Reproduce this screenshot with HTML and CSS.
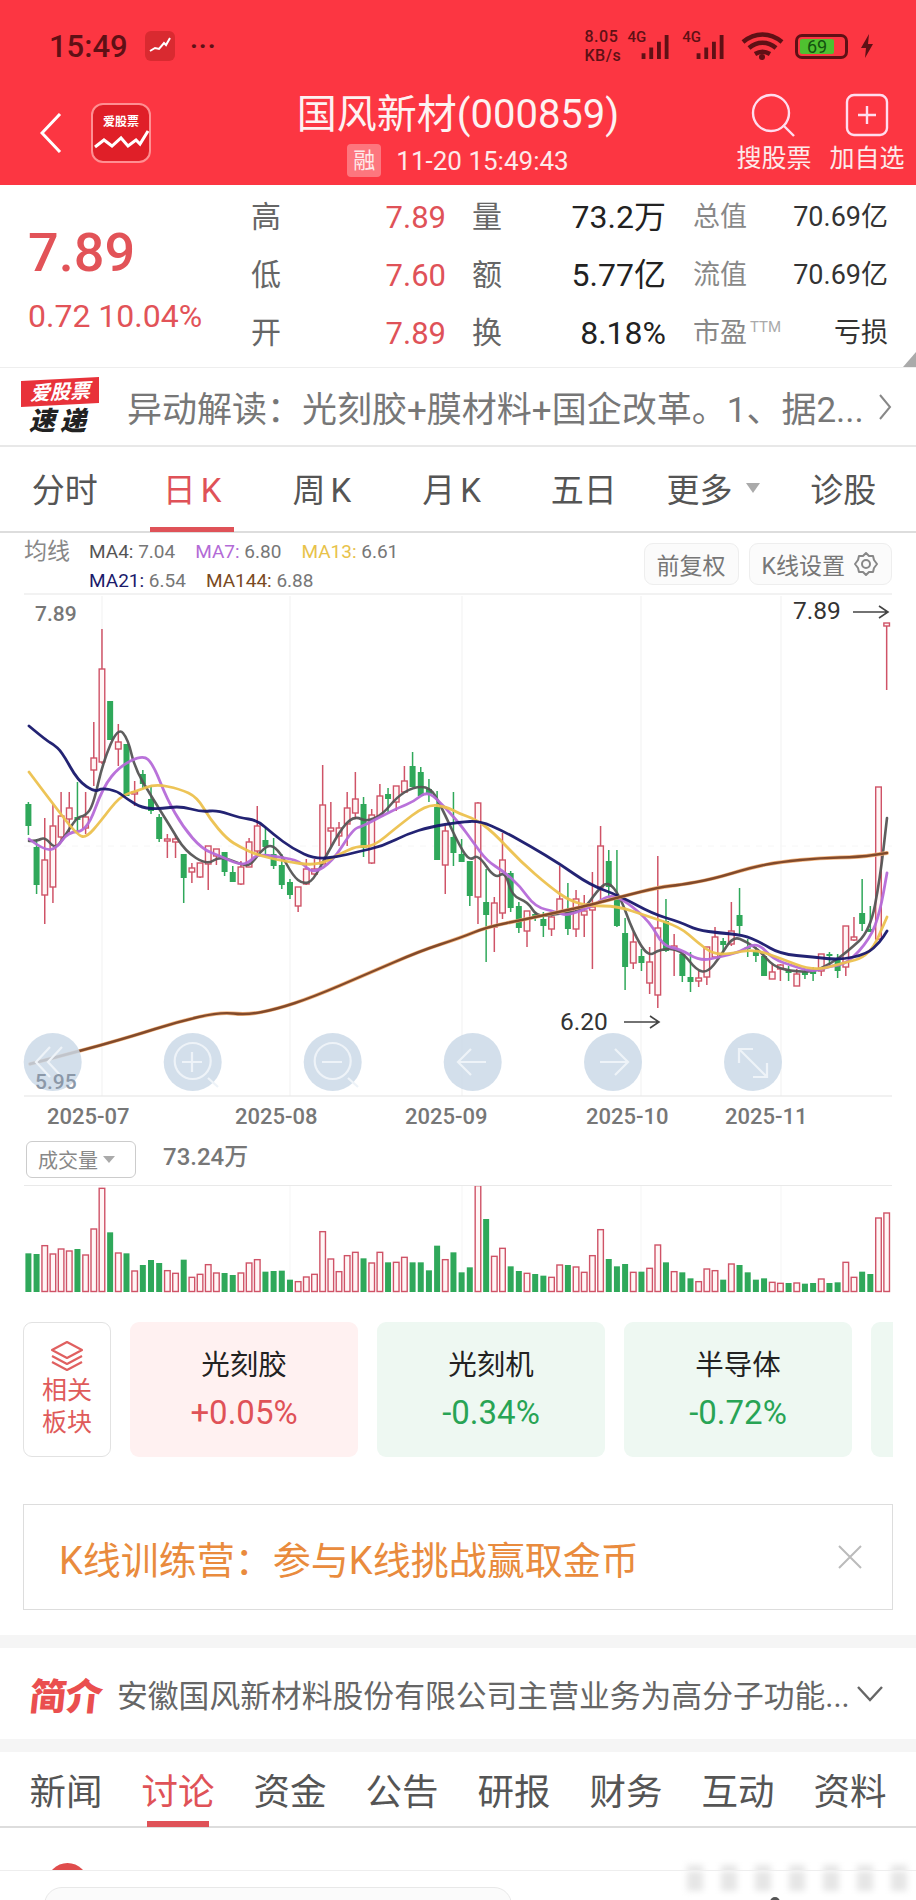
FILE: index.html
```html
<!doctype html>
<html lang="zh-CN">
<head>
  <meta charset="UTF-8">
  <title>国风新材(000859)</title>
  <meta name="viewport" content="width=device-width, initial-scale=1.0">
  <link rel="stylesheet" href="styles.css">
</head>
<body>
<div class="page">

  <header class="top">
    <div class="status">
      <div class="status-left">
        <span class="clock">15:49</span>
        <span class="app-mini">
          <svg viewBox="0 0 30 30" width="30" height="30"><path d="M5 20l5-3 4 1 5-6 2 2 4-7" fill="none" stroke="#fff" stroke-width="2"/></svg>
        </span>
        <span class="dots">···</span>
      </div>
      <div class="status-right">
        <span class="speed">8.05<br>KB/s</span>
        <span class="net"><b>4G</b>
          <svg viewBox="0 0 36 26" width="38" height="25"><path d="M2 19h4v6H2zM10 13h4v12h-4zM18 7h4v18h-4zM26 0h4v25h-4z" fill="#5f1015"/></svg>
        </span>
        <span class="net"><b>4G</b>
          <svg viewBox="0 0 36 26" width="38" height="25"><path d="M2 19h4v6H2zM10 13h4v12h-4zM18 7h4v18h-4zM26 0h4v25h-4z" fill="#5f1015"/></svg>
        </span>
        <svg class="wifi" viewBox="0 0 43 28" width="43" height="28">
          <path d="M2 10c12-10 27-10 39 0M8 16c8-7 19-7 27 0M14 22c5-3 10-3 15 0" fill="none" stroke="#5f1015" stroke-width="4.4"/>
          <circle cx="21" cy="25" r="3" fill="#5f1015"/>
        </svg>
        <span class="battery"><span class="battery-fill">69</span></span>
        <svg viewBox="0 0 14 26" width="14" height="26"><path d="M9 1L1 15h5l-1 10 8-14H8z" fill="#5f1015"/></svg>
      </div>
    </div>

    <div class="titlebar">
      <div class="title-left">
        <svg class="back" viewBox="0 0 22 40" width="22" height="40"><path d="M20 1L2 20l18 19" fill="none" stroke="#fff" stroke-width="3"/></svg>
        <div class="app-logo">
          <span>爱股票</span>
          <svg viewBox="0 0 56 24" width="56" height="24"><path d="M2 18l9-7 8 6 9-8 7 8 8-6 4 4 8-13" fill="none" stroke="#fff" stroke-width="3"/></svg>
        </div>
      </div>
      <div class="title-mid">
        <div class="stock-name">国风新材(000859)</div>
        <div class="stock-time"><span class="rong">融</span>11-20 15:49:43</div>
      </div>
      <div class="title-right">
        <div class="action">
          <svg viewBox="0 0 46 44" width="46" height="44"><circle cx="20" cy="20" r="18" fill="none" stroke="#fde" stroke-width="2.4"/><path d="M32 32l11 11" stroke="#fde" stroke-width="2.4"/></svg>
          <span>搜股票</span>
        </div>
        <div class="action">
          <svg viewBox="0 0 44 44" width="44" height="44"><rect x="2" y="2" width="40" height="40" rx="7" fill="none" stroke="#fde" stroke-width="2.4"/><path d="M22 13v18M13 22h18" stroke="#fde" stroke-width="2.4"/></svg>
          <span>加自选</span>
        </div>
      </div>
    </div>
  </header>

  <section class="quote">
    <div class="price">
      <div class="price-now">7.89</div>
      <div class="price-change">0.72 10.04%</div>
    </div>
    <div class="quote-grid">
      <span class="q-label">高</span><span class="q-val up">7.89</span>
      <span class="q-label mid">量</span><span class="q-val">73.2万</span>
      <span class="q-label small">总值</span><span class="q-val small">70.69亿</span>

      <span class="q-label">低</span><span class="q-val up">7.60</span>
      <span class="q-label mid">额</span><span class="q-val">5.77亿</span>
      <span class="q-label small">流值</span><span class="q-val small">70.69亿</span>

      <span class="q-label">开</span><span class="q-val up">7.89</span>
      <span class="q-label mid">换</span><span class="q-val">8.18%</span>
      <span class="q-label small ttm">市盈<sup>TTM</sup></span><span class="q-val small">亏损</span>
    </div>
    <span class="corner"></span>
  </section>

  <section class="flash">
    <div class="flash-logo">
      <span class="flash-tag">爱股票</span>
      <span class="flash-word">速递</span>
    </div>
    <div class="flash-text">异动解读：光刻胶+膜材料+国企改革。1、据2...</div>
    <svg viewBox="0 0 14 28" width="14" height="28"><path d="M2 2l10 12L2 26" fill="none" stroke="#888" stroke-width="2"/></svg>
  </section>

  <nav class="period-tabs">
    <span>分时</span>
    <span class="on k-tab">日K</span>
    <span class="k-tab">周K</span>
    <span class="k-tab">月K</span>
    <span>五日</span>
    <span>更多<i class="caret"></i></span>
    <span>诊股</span>
  </nav>

  <section class="ma-bar">
    <span class="ma-title">均线</span>
    <div class="ma-list">
      <span class="ma"><b class="c4">MA4:</b> 7.04</span>
      <span class="ma"><b class="c7">MA7:</b> 6.80</span>
      <span class="ma"><b class="c13">MA13:</b> 6.61</span>
      <span class="ma"><b class="c21">MA21:</b> 6.54</span>
      <span class="ma"><b class="c144">MA144:</b> 6.88</span>
    </div>
    <div class="ma-btns">
      <span class="chip">前复权</span>
      <span class="chip">K线设置
        <svg viewBox="0 0 26 26" width="26" height="26"><path d="M13 2l3 3h4l1 4 3 4-3 4-1 4h-4l-3 3-3-3H6l-1-4-3-4 3-4 1-4h4z" fill="none" stroke="#888" stroke-width="2" stroke-linejoin="round"/><circle cx="13" cy="13" r="4" fill="none" stroke="#888" stroke-width="2"/></svg>
      </span>
    </div>
  </section>

  <svg id="kline" class="kline" viewBox="0 596 916 544" width="916" height="544"></svg>

  <section class="vol-bar">
    <span class="vol-select">成交量<i class="caret small-caret"></i></span>
    <span class="vol-num">73.24万</span>
  </section>

  <svg id="volume" class="volume" viewBox="0 1187 916 113" width="916" height="113"></svg>

  <section class="blocks">
    <div class="block-head">
      <svg viewBox="0 0 36 32" width="36" height="32"><path d="M18 2l15 8-15 8-15-8zM3 16l15 8 15-8M3 22l15 8 15-8" fill="none" stroke="#e06060" stroke-width="2.2" stroke-linejoin="round"/></svg>
      <span>相关</span><span>板块</span>
    </div>
    <div class="block red-card"><div class="block-name">光刻胶</div><div class="block-val">+0.05%</div></div>
    <div class="block green-card"><div class="block-name">光刻机</div><div class="block-val">-0.34%</div></div>
    <div class="block green-card"><div class="block-name">半导体</div><div class="block-val">-0.72%</div></div>
    <div class="block green-card"></div>
  </section>

  <section class="banner">
    <span>K线训练营：参与K线挑战赢取金币</span>
    <svg viewBox="0 0 24 24" width="24" height="24"><path d="M1 1l22 22M23 1L1 23" stroke="#bbb" stroke-width="2"/></svg>
  </section>

  <section class="intro">
    <span class="intro-tag">简介</span>
    <span class="intro-text">安徽国风新材料股份有限公司主营业务为高分子功能...</span>
    <svg viewBox="0 0 26 16" width="26" height="16"><path d="M1 1l12 13L25 1" fill="none" stroke="#666" stroke-width="2.4"/></svg>
  </section>

  <nav class="news-tabs">
    <span>新闻</span>
    <span class="on">讨论</span>
    <span>资金</span>
    <span>公告</span>
    <span>研报</span>
    <span>财务</span>
    <span>互动</span>
    <span>资料</span>
  </nav>

  <div class="feed-peek"><span class="avatar"></span><span class="blurred"></span></div>
  <div class="input-bar"><span class="input-box"></span></div>
</div>
<script src="chart.js"></script>
</body>
</html>
```

FILE: styles.css
```css
* { box-sizing: border-box; }

html, body {
  margin: 0;
  padding: 0;
  background: #fff;
}

body {
  font-family: Roboto, "Noto Sans CJK SC", sans-serif;
  color: #333;
}

.page {
  width: 916px;
  height: 1900px;
  overflow: hidden;
}

/* red header */
.top {
  height: 185px;
  background: #fc3642;
  color: #fff;
}

.status {
  height: 92px;
  display: flex;
  justify-content: space-between;
  align-items: center;
  padding: 0 42px 0 49px;
}

.status-left, .status-right {
  display: flex;
  align-items: center;
}

.clock {
  font-size: 31px;
  font-weight: 500;
  color: #5f1015;
  width: 96px;
}

.app-mini {
  width: 30px;
  height: 30px;
  border-radius: 6px;
  background: #d92a30;
  display: block;
}

.app-mini svg { display: block; }

.dots {
  margin-left: 15px;
  font-size: 26px;
  font-weight: 700;
  color: #5f1015;
  letter-spacing: 1px;
}

.status-right { color: #5f1015; }

.speed {
  font-size: 16px;
  line-height: 19px;
  font-weight: 500;
  width: 38px;
  margin-right: 5px;
  letter-spacing: .5px;
  white-space: nowrap;
}

.net {
  display: flex;
  align-items: flex-start;
  height: 30px;
  margin-right: 6px;
}

.net b { font-size: 15px; font-weight: 500; line-height: 18px; margin-right: -8px; position: relative; top: -3px; }
.net svg { margin-top: 4px; }

.wifi { margin: 0 11px 0 4px; }

.battery {
  width: 53px;
  height: 25px;
  border: 3px solid #5f1015;
  border-radius: 7px;
  padding: 2px;
  margin-right: 12px;
}

.battery-fill {
  display: block;
  width: 34px;
  height: 15px;
  background: #4fc030;
  border-radius: 2px;
  font-size: 18px;
  line-height: 15px;
  text-align: center;
  color: #14500f;
}

.titlebar {
  display: grid;
  grid-template-columns: 1fr auto 1fr;
  height: 93px;
}

.title-left {
  display: flex;
  align-items: flex-start;
  padding: 11px 0 0 40px;
  gap: 29px;
}

.back { margin-top: 10px; }

.app-logo {
  width: 60px;
  height: 60px;
  border-radius: 12px;
  background: #e01f28;
  border: 2px solid #ff8f92;
  text-align: center;
  font-size: 12px;
  font-weight: 700;
  line-height: 22px;
  padding-top: 6px;
  overflow: hidden;
}

.app-logo svg { display: block; margin: -4px 0 0 0; }

.stock-name {
  font-size: 40px;
  line-height: 46px;
  text-align: center;
  color: #fdf2f2;
}

.stock-time {
  display: flex;
  align-items: center;
  font-size: 26px;
  height: 33px;
  margin-top: 6px;
  justify-content: center;
  color: #fdeaea;
  gap: 15px;
}

.rong {
  width: 34px;
  height: 33px;
  background: rgba(255, 255, 255, .32);
  border-radius: 4px;
  font-size: 22px;
  line-height: 33px;
  text-align: center;
}

.title-right {
  display: flex;
  justify-content: flex-end;
  padding: 0 11px 0 0;
  gap: 17px;
}

.action {
  display: flex;
  flex-direction: column;
  align-items: center;
  width: 76px;
  font-size: 25px;
  line-height: 30px;
  color: #fdeaea;
  white-space: nowrap;
}

.action svg { display: block; margin-top: 1px; margin-bottom: 7px; }

/* quote */
.quote {
  position: relative;
  height: 183px;
  display: flex;
  border-bottom: 1px solid #eee;
}

.price {
  width: 251px;
  padding: 38px 0 0 28px;
  color: #e25358;
}

.price-now {
  font-size: 54px;
  line-height: 60px;
  font-weight: 500;
}

.price-change {
  font-size: 32px;
  line-height: 34px;
  margin-top: 16px;
  white-space: nowrap;
}

.quote-grid {
  display: grid;
  grid-template-columns: 30px 165px 56px 164px 82px 140px;
  grid-template-rows: 58px 58px 58px;
  padding-top: 3px;
  align-items: center;
}

.q-label { font-size: 30px; color: #666; line-height: 1; }
.q-val { font-size: 32px; text-align: right; color: #222; line-height: 1; }
.q-val.up { font-size: 31px; color: #df5258; }
.q-label.mid { padding-left: 26px; }
.q-label.small { font-size: 27px; color: #888; padding-left: 27px; white-space: nowrap; }
.q-val.small { font-size: 27px; color: #333; }

.ttm sup { font-size: 15px; color: #aaa; vertical-align: 10px; line-height: 0; margin-left: 3px; }

.corner {
  position: absolute;
  right: 0;
  bottom: 0;
  width: 0;
  height: 0;
  border-left: 13px solid transparent;
  border-bottom: 15px solid #aaa;
}

/* flash news */
.flash {
  height: 79px;
  display: flex;
  align-items: center;
  padding: 0 24px 0 20px;
  border-bottom: 2px solid #e8e8e8;
}

.flash-logo {
  width: 80px;
  height: 56px;
  display: flex;
  flex-direction: column;
  align-items: center;
  flex: none;
}

.flash-tag {
  width: 78px;
  height: 26px;
  background: #e8323a;
  color: #fff;
  font-size: 20px;
  font-weight: 700;
  font-style: italic;
  line-height: 26px;
  text-align: center;
  transform: skewY(-3deg);
}

.flash-word {
  font-size: 26px;
  line-height: 32px;
  font-weight: 900;
  font-style: italic;
  color: #222;
  letter-spacing: 5px;
}

.flash-text {
  flex: 1;
  margin-left: 27px;
  font-size: 35px;
  color: #777;
  white-space: nowrap;
}

/* period tabs */
.period-tabs {
  height: 86px;
  display: flex;
  align-items: stretch;
  padding-right: 8px;
  border-bottom: 2px solid #ddd;
}

.period-tabs span {
  flex: 1;
  display: flex;
  justify-content: center;
  align-items: center;
  font-size: 33px;
  color: #555;
  position: relative;
  padding-bottom: 2px;
}

.period-tabs .k-tab { letter-spacing: 5px; }
.period-tabs .on { color: #df5258; }

.period-tabs .on::after {
  content: "";
  position: absolute;
  left: 20px;
  width: 84px;
  bottom: -1px;
  height: 5px;
  background: #df5258;
}

.caret {
  display: block;
  width: 0;
  height: 0;
  margin-left: 14px;
  border-left: 7px solid transparent;
  border-right: 7px solid transparent;
  border-top: 10px solid #aaa;
}

/* ma legend */
.ma-bar {
  height: 62px;
  display: flex;
  margin: 0 24px;
  border-bottom: 2px solid #f2f2f2;
  position: relative;
}

.ma-title {
  font-size: 23px;
  color: #888;
  line-height: 29px;
  padding-top: 4px;
  width: 65px;
  flex: none;
}

.ma-list {
  width: 400px;
  display: flex;
  flex-wrap: wrap;
  column-gap: 20px;
  padding-top: 4px;
  font-size: 19px;
  line-height: 29px;
  color: #777;
}

.ma b { font-weight: 400; }
.c4 { color: #555; }
.c7 { color: #b36bd6; }
.c13 { color: #e8c24a; }
.c21 { color: #1b1b6b; }
.c144 { color: #7a4a22; }

.ma-btns {
  margin-left: auto;
  display: flex;
  gap: 10px;
  padding-top: 10px;
}

.chip {
  height: 42px;
  padding: 0 12px;
  display: flex;
  align-items: center;
  gap: 8px;
  border: 1px solid #eee;
  border-radius: 9px;
  background: #fbfbfb;
  font-size: 23px;
  color: #777;
}

.kline, .volume { display: block; }

/* volume header */
.vol-bar {
  height: 47px;
  display: flex;
  align-items: flex-start;
  margin: 0 24px;
  border-bottom: 1px solid #e9e9e9;
  padding-left: 2px;
}

.vol-select {
  width: 110px;
  height: 37px;
  margin-top: 2px;
  border: 1px solid #ccc;
  border-radius: 6px;
  font-size: 20px;
  color: #888;
  display: flex;
  align-items: center;
  padding-left: 11px;
}

.small-caret {
  margin-left: 5px;
  border-left-width: 6px;
  border-right-width: 6px;
  border-top-width: 7px;
}

.vol-num {
  margin-left: 27px;
  font-size: 24px;
  line-height: 36px;
  font-weight: 500;
  color: #777;
}

/* related sectors */
.blocks {
  display: flex;
  gap: 19px;
  margin: 23px 23px 0;
  height: 135px;
  overflow: hidden;
}

.block-head {
  width: 88px;
  flex: none;
  border: 1px solid #e2e2e2;
  border-radius: 9px;
  display: flex;
  flex-direction: column;
  align-items: center;
  padding-top: 17px;
  color: #df5b5b;
  font-size: 25px;
  line-height: 32px;
}

.block-head svg { margin-bottom: 3px; }

.block {
  width: 228px;
  flex: none;
  border-radius: 9px;
  text-align: center;
}

.block-name {
  font-size: 28.5px;
  line-height: 36px;
  color: #222;
  padding-top: 26px;
}

.block-val {
  font-size: 33px;
  line-height: 36px;
  margin-top: 11px;
}

.red-card { background: #fff1f1; color: #df5258; }
.green-card { background: #eef8f2; color: #28a455; }

/* banner */
.banner {
  margin: 47px 23px 0;
  height: 106px;
  border: 1px solid #ddd;
  display: flex;
  justify-content: space-between;
  align-items: center;
  padding: 0 30px 0 35px;
  font-size: 38px;
  color: #e98b3d;
}

/* intro */
.intro {
  margin-top: 25px;
  border-top: 13px solid #f5f5f5;
  border-bottom: 13px solid #f5f5f5;
  padding: 0 33px 0 30px;
  height: 117px;
  display: flex;
  align-items: center;
}

.intro-tag {
  font-size: 37px;
  font-weight: 900;
  color: #ea4f4f;
  width: 87px;
  flex: none;
  transform: skewX(-6deg);
  letter-spacing: -1px;
}

.intro-text {
  flex: 1;
  font-size: 30.8px;
  color: #666;
  white-space: nowrap;
  overflow: hidden;
}

/* news tabs */
.news-tabs {
  height: 76px;
  padding: 0 10px;
  display: flex;
  border-bottom: 2px solid #ddd;
}

.news-tabs span {
  flex: 1;
  display: flex;
  justify-content: center;
  align-items: center;
  font-size: 36.5px;
  color: #555;
  position: relative;
}

.news-tabs .on { color: #df5258; }

.news-tabs .on::after {
  content: "";
  position: absolute;
  left: 25px;
  right: 25px;
  bottom: -1px;
  height: 6px;
  background: #df5258;
}

.feed-peek {
  height: 43px;
  position: relative;
  border-bottom: 1px solid #eee;
  overflow: hidden;
}

.avatar {
  position: absolute;
  left: 47px;
  top: 35px;
  width: 41px;
  height: 41px;
  border-radius: 50%;
  background: #e04c4c;
}

.blurred {
  position: absolute;
  left: 687px;
  top: 37px;
  width: 221px;
  height: 10px;
  background: repeating-linear-gradient(90deg, #e6e6e6 0 16px, #fff 16px 34px);
  filter: blur(3px);
}

.input-bar {
  height: 30px;
  padding: 16px 0 0 44px;
  overflow: hidden;
  position: relative;
}

.input-bar::before {
  content: "";
  position: absolute;
  left: 687px;
  top: 0;
  width: 221px;
  height: 20px;
  background: repeating-linear-gradient(90deg, #e6e6e6 0 16px, #fff 16px 34px);
  filter: blur(3px);
}

.input-bar::after {
  content: "";
  position: absolute;
  left: 770px;
  top: 26px;
  width: 10px;
  height: 10px;
  border-radius: 50%;
  background: #555;
}

.input-box {
  display: block;
  width: 468px;
  height: 40px;
  border: 1px solid #e8e8e8;
  border-radius: 18px;
  background: #fbfbfb;
}
```

FILE: chart.js
```js
// y values are page pixels, the svg viewBoxes are set up to match
const NS = "http://www.w3.org/2000/svg";
const X0 = 28.4, STEP = 8.174;

// type (g/r), high, body top, body bottom, low
const candles = [
  ["g",803,805,827,836],["g",840,848,886,895],["r",819,861,896,925],["r",805,827,888,904],
  ["r",793,817,838,842],["r",793,809,820,833],["g",783,818,821,832],["r",793,818,829,835],
  ["r",723,759,771,787],["r",630,670,763,765],["g",702,702,741,741],["r",725,743,750,767],
  ["g",745,745,797,797],["r",782,793,795,807],["g",771,775,785,790],["g",787,800,812,815],
  ["g",815,818,840,843],["r",835,840,842,859],["r",836,840,843,859],["g",855,855,879,904],
  ["r",864,869,873,884],["r",864,864,878,879],["r",847,847,865,891],["r",850,850,857,866],
  ["g",853,853,873,877],["g",867,873,883,883],["r",862,868,885,886],["r",839,843,868,868],
  ["r",807,827,852,857],["g",828,841,848,857],["g",839,855,867,870],["g",855,866,886,890],
  ["g",880,883,896,900],["r",888,888,907,913],["r",860,870,885,886],["r",860,870,875,877],
  ["r",766,806,865,865],["r",803,829,832,847],["r",823,829,837,847],["r",793,809,825,847],
  ["r",773,800,814,820],["g",798,805,849,858],["r",810,816,864,865],["r",785,797,817,818],
  ["g",789,795,800,813],["r",787,787,803,812],["r",767,782,793,793],["g",753,767,788,788],
  ["g",768,773,797,797],["g",780,790,795,803],["g",792,808,861,861],["r",827,832,866,895],
  ["g",793,838,854,867],["g",840,855,863,863],["g",862,862,897,907],["r",803,804,898,925],
  ["g",870,903,916,963],["r",898,904,928,953],["r",834,861,914,920],["g",872,874,909,913],
  ["g",903,907,929,934],["r",912,912,932,948],["g",913,915,918,922],["g",913,920,927,938],
  ["r",913,918,930,937],["r",867,900,913,915],["g",884,912,930,936],["r",891,900,930,938],
  ["r",896,912,916,938],["r",873,908,911,970],["r",827,847,888,900],["g",851,862,888,897],
  ["g",851,900,927,928],["g",919,934,968,991],["r",933,943,964,970],["g",950,957,964,972],
  ["r",948,963,984,995],["r",857,929,996,1009],["g",900,922,952,953],["r",935,947,950,977],
  ["g",955,955,977,983],["g",953,978,983,993],["r",972,979,982,988],["r",948,948,978,986],
  ["r",928,938,958,958],["g",939,942,946,955],["r",903,932,945,947],["g",889,916,927,935],
  ["g",940,948,950,958],["g",948,952,957,963],["g",957,957,977,977],["r",965,973,980,980],
  ["r",965,966,970,982],["g",967,971,974,982],["r",970,975,987,987],["g",970,973,976,980],
  ["g",968,972,975,982],["r",955,955,972,977],["g",953,955,957,967],["g",955,960,972,979],
  ["r",927,927,968,977],["r",918,938,941,942],["g",880,914,925,932],["g",907,930,933,933],
  ["r",788,788,940,941],["r",624,624,627,691]
];

const ma4 = [[29,842],[37,842],[45,838],[55,850],[63,840],[77,818],[85,817],[93,807],[103,763],[118,728],[128,740],[135,770],[153,800],[170,827],[185,852],[207,866],[220,857],[240,865],[250,867],[260,853],[270,845],[280,853],[293,877],[303,885],[313,882],[327,855],[343,827],[355,817],[367,823],[383,815],[397,798],[413,788],[430,788],[440,805],[460,848],[470,862],[478,855],[495,880],[505,872],[512,897],[528,903],[537,918],[557,915],[583,912],[597,892],[608,882],[620,897],[633,933],[648,958],[660,950],[680,950],[697,972],[708,973],[720,958],[733,937],[747,943],[760,952],[773,967],[790,972],[813,973],[830,965],[847,953],[870,932],[880,880],[887,819]];
const ma7 = [[29,840],[45,852],[57,849],[68,833],[87,832],[103,788],[120,767],[143,756],[153,765],[167,800],[183,828],[202,850],[220,857],[240,866],[250,863],[257,855],[280,858],[300,862],[313,875],[333,862],[353,830],[363,827],[380,818],[400,808],[413,803],[427,792],[440,803],[460,825],[473,843],[487,862],[503,872],[520,887],[535,908],[557,913],[567,917],[593,907],[610,895],[627,903],[650,923],[663,947],[680,950],[700,962],[720,958],[740,953],[757,943],[773,960],[793,967],[813,973],[830,967],[847,965],[870,940],[880,913],[887,874]];
const ma13 = [[29,773],[53,805],[78,837],[87,838],[100,823],[120,797],[137,792],[155,785],[180,790],[197,798],[210,820],[227,840],[240,848],[257,856],[283,862],[317,867],[340,855],[357,847],[373,848],[397,828],[427,805],[447,808],[460,815],[475,820],[493,833],[520,862],[550,888],[570,902],[590,907],[617,907],[647,917],[680,928],[697,943],[713,955],[730,955],[753,950],[777,958],[813,972],[840,965],[870,957],[887,918]];
const ma21 = [[29,727],[47,742],[53,745],[62,753],[78,782],[95,793],[102,789],[117,792],[127,800],[142,809],[160,810],[180,807],[202,813],[217,811],[240,819],[257,821],[273,835],[293,850],[315,860],[337,858],[357,853],[383,847],[407,835],[430,828],[460,823],[480,822],[503,832],[530,847],[560,865],[590,886],[620,897],[653,915],[680,923],[697,931],[720,934],[743,936],[760,943],[780,955],[813,958],[840,961],[867,955],[880,943],[887,932]];
const ma144 = [[30,1065],[80,1052],[133,1037],[177,1023],[220,1013],[247,1016],[277,1010],[313,998],[367,975],[420,952],[460,939],[487,928],[527,920],[590,906],[620,898],[660,888],[680,886],[713,880],[753,868],[780,863],[820,859],[860,858],[887,854]];

// top of each volume bar, in units of 1/3 px from y=840
const volTops = [1243,1245,1220,1245,1230,1236,1230,1248,1170,1048,1180,1242,1243,1296,1278,1263,1272,1295,1303,1262,1315,1306,1277,1302,1302,1308,1302,1272,1262,1298,1296,1295,1322,1328,1314,1306,1178,1260,1298,1250,1240,1258,1272,1240,1270,1270,1255,1270,1270,1294,1220,1262,1240,1300,1285,1040,1140,1252,1228,1282,1296,1303,1305,1310,1315,1278,1278,1284,1300,1250,1172,1260,1282,1275,1300,1298,1288,1218,1270,1298,1300,1318,1328,1290,1295,1322,1275,1278,1300,1322,1318,1330,1333,1332,1332,1334,1332,1320,1332,1330,1270,1315,1298,1305,1137,1122];

const RED = "#cf5367", GREEN = "#2fa85a";

function el(parent, name, attrs, text) {
  const node = document.createElementNS(NS, name);
  for (const k in attrs) node.setAttribute(k, attrs[k]);
  if (text) node.textContent = text;
  parent.appendChild(node);
  return node;
}

function rect(parent, x, y, w, h, color, hollow) {
  el(parent, "rect", {
    x: x, y: y, width: w, height: Math.max(h, 1),
    fill: hollow ? "#fff6f6" : color,
    stroke: hollow ? color : "none",
    "stroke-width": hollow ? 1.4 : 0
  });
}

// rounded line through the points (midpoint quadratics)
function smooth(pts) {
  let d = "M" + pts[0][0] + " " + pts[0][1];
  for (let i = 1; i < pts.length - 1; i++) {
    const mx = (pts[i][0] + pts[i + 1][0]) / 2;
    const my = (pts[i][1] + pts[i + 1][1]) / 2;
    d += "Q" + pts[i][0] + " " + pts[i][1] + " " + mx + " " + my;
  }
  const last = pts[pts.length - 1];
  return d + "L" + last[0] + " " + last[1];
}

function line(parent, pts, color, width) {
  el(parent, "path", { d: smooth(pts), fill: "none", stroke: color, "stroke-width": width, "stroke-linecap": "round", opacity: 0.95 });
}

function drawKline() {
  const svg = document.getElementById("kline");

  [102, 290, 462, 641, 781].forEach((x) => {
    el(svg, "line", { x1: x, x2: x, y1: 597, y2: 1097, stroke: "#f3f3f3", "stroke-width": 1.2 });
  });
  el(svg, "line", { x1: 24, x2: 892, y1: 847, y2: 847, stroke: "#f6f6f6", "stroke-width": 1, "stroke-dasharray": "6 6" });
  el(svg, "line", { x1: 24, x2: 892, y1: 1097, y2: 1097, stroke: "#e4e4e4", "stroke-width": 1.2 });

  candles.forEach((c, i) => {
    const x = X0 + STEP * i;
    const color = c[0] === "g" ? GREEN : RED;
    el(svg, "line", { x1: x, x2: x, y1: c[1], y2: c[4], stroke: color, "stroke-width": 1.5 });
    if (c[0] === "g") rect(svg, x - 3, c[2], 6, c[3] - c[2], color, false);
    else rect(svg, x - 2.8, c[2], 5.6, c[3] - c[2], color, true);
  });

  line(svg, ma4, "#555", 2.6);
  line(svg, ma7, "#b56ad8", 2.8);
  line(svg, ma13, "#ecc14e", 2.8);
  line(svg, ma21, "#17176b", 2.8);
  line(svg, ma144, "#f3b27a", 3.8);
  line(svg, ma144, "#7b4526", 2.4);

  // high and low markers
  const text = (x, y, size, color, str, extra) => el(svg, "text", Object.assign({ x: x, y: y, "font-size": size, fill: color }, extra || {}), str);
  text(35, 622, 21, "#777", "7.89", { "font-weight": 500 });
  text(793, 620, 24.5, "#333", "7.89");
  text(560, 1031, 24.5, "#333", "6.20");
  const arrows = "M853 613h35m-9-6l9 6-9 6M624 1023h35m-9-6l9 6-9 6";
  el(svg, "path", { d: arrows, fill: "none", stroke: "#444", "stroke-width": 1.6 });

  // round buttons over the chart
  const btn = [52.7, 192.7, 332.7, 472.7, 613, 753];
  btn.forEach((cx) => el(svg, "circle", { cx: cx, cy: 1063, r: 29, fill: "#cbd9e8", opacity: 0.85 }));
  const icons = [
    "M62 1048l-14 15 14 15M50 1048l-14 15 14 15",
    "M208 1079l10 9M192 1053v20M182 1063h20",
    "M348 1079l10 9M322 1063h20",
    "M486 1063h-27m12-13l-13 13 13 13",
    "M600 1063h27m-12-13l13 13-13 13",
    "M739 1050l28 28M739 1064v-14h14M767 1064v14h-14"
  ];
  icons.forEach((d) => el(svg, "path", { d: d, fill: "none", stroke: "#eef3f8", "stroke-width": 2.2 }));
  [192.7, 332.7].forEach((cx) => el(svg, "circle", { cx: cx, cy: 1062, r: 18, fill: "none", stroke: "#eef3f8", "stroke-width": 2.2 }));

  text(35, 1090, 21, "#8b98a8", "5.95", { "font-weight": 500 });

  const dates = [[47, "2025-07"], [235, "2025-08"], [405, "2025-09"], [586, "2025-10"], [725, "2025-11"]];
  dates.forEach((d) => text(d[0], 1125, 22, "#777", d[1], { "font-weight": 500 }));
}

function drawVolume() {
  const svg = document.getElementById("volume");
  [102, 290, 462, 641, 781].forEach((x) => {
    el(svg, "line", { x1: x, x2: x, y1: 1187, y2: 1293, stroke: "#f5f5f5", "stroke-width": 1 });
  });
  volTops.forEach((z, i) => {
    const x = X0 + STEP * i;
    const top = 840 + z / 3;
    const green = candles[i][0] === "g";
    if (green) rect(svg, x - 3, top, 6, 1293 - top, GREEN, false);
    else rect(svg, x - 2.8, top, 5.6, 1292.5 - top, RED, true);
  });
}

drawKline();
drawVolume();
```
